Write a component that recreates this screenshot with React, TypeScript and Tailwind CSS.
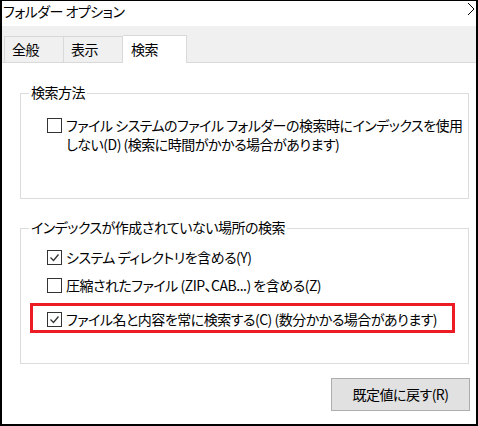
import React from "react";

const font = "font-['Noto_Sans_CJK_JP','Noto_Sans',sans-serif] [font-feature-settings:'palt'] tracking-[-0.5px]";

function Check({ checked }: { checked?: boolean }) {
  return (
    <div className="w-[15px] h-[15px] border border-[#333333] bg-white shrink-0 relative">
      {checked && (
        <svg width="13" height="13" viewBox="0 0 13 13" className="absolute left-0 top-0">
          <polyline points="2.5,6.5 5.5,9.5 10.5,3.5" fill="none" stroke="#333333" strokeWidth="1.3" />
        </svg>
      )}
    </div>
  );
}

function Row({ checked, children }: { checked?: boolean; children: React.ReactNode }) {
  return (
    <div className="flex items-center gap-[4px] h-[15px]">
      <Check checked={checked} />
      <span className="whitespace-nowrap leading-[19px]">{children}</span>
    </div>
  );
}

export default function App() {
  return (
    <div className={`w-[478px] h-[426px] bg-white border-t border-l-2 border-r-2 border-b-2 border-black text-[14px] text-black overflow-hidden flex flex-col ${font}`}>
      {/* title bar */}
      <div className="h-[25px] relative shrink-0">
        <div className="pl-[1px] leading-[20px] whitespace-nowrap">フォルダー オプション</div>
        <svg width="8" height="14" viewBox="0 0 8 14" className="absolute right-0 top-[1px]">
          <line x1="0" y1="1" x2="6" y2="7" stroke="#000" strokeWidth="1" />
          <line x1="6" y1="7" x2="0" y2="13" stroke="#000" strokeWidth="1" />
        </svg>
      </div>
      {/* tab band */}
      <div className="h-[37px] bg-[#f0f0f0] flex items-end pl-[2px] shrink-0 border-b border-[#d9d9d9]">
        <div className="w-[60px] h-[26px] border border-[#d9d9d9] border-b-0 flex items-center pl-[7px]">全般</div>
        <div className="w-[59px] h-[26px] border border-l-0 border-[#d9d9d9] border-b-0 flex items-center pl-[7px]">表示</div>
        <div className="w-[64px] h-[28px] -mb-px bg-white border border-l-0 border-[#d9d9d9] border-b-0 flex items-center pl-[8px] pb-[1px] relative z-10">検索</div>
      </div>
      {/* content */}
      <div className="flex-1 flex flex-col pl-[18px]">
        <div className="mt-[30px] w-[449px] h-[106px] border border-[#dcdcdc] relative">
          <div className="absolute left-[8px] -top-[11px] bg-white px-[2px] leading-[19px]">検索方法</div>
          <div className="pl-[26px] pt-[23px] flex items-start gap-[4px]">
            <div className="pt-[1px]"><Check /></div>
            <div className="leading-[19px] -mt-[1px] whitespace-nowrap">
              ファイル システムのファイル フォルダーの検索時にインデックスを使用
              <br />
              しない(D) (検索に時間がかかる場合があります)
            </div>
          </div>
        </div>
        <div className="mt-[29px] w-[449px] h-[136px] border border-[#dcdcdc] relative">
          <div className="absolute left-[8px] -top-[11px] bg-white px-[2px] leading-[19px]">インデックスが作成されていない場所の検索</div>
          <div className="pl-[26px] pt-[21px] flex flex-col gap-[13px]">
            <Row checked>システム ディレクトリを含める(Y)</Row>
            <Row>圧縮されたファイル (ZIP、CAB...) を含める(Z)</Row>
          </div>
          <div className="ml-[9px] mt-[10px] w-[425px] h-[30px] border-[3px] border-[#ed1c24] pl-[14px] pt-[6px]">
            <Row checked>ファイル名と内容を常に検索する(C) (数分かかる場合があります)</Row>
          </div>
        </div>
        <div className="mt-[14px] ml-[311px] w-[139px] h-[33px] bg-[#e1e1e1] border border-[#adadad] flex items-center justify-center whitespace-nowrap">
          既定値に戻す(R)
        </div>
      </div>
    </div>
  );
}
